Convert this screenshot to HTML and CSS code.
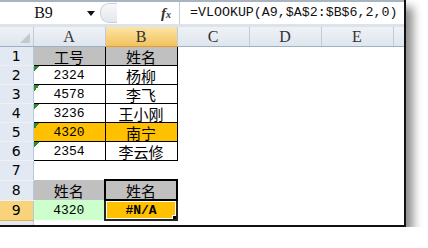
FILE: index.html
```html
<!doctype html>
<html lang="zh">
  <head>
    <meta charset="UTF-8" />
    <meta name="viewport" content="width=device-width, initial-scale=1.0" />
    <title>VLOOKUP</title>
    <link rel="stylesheet" href="styles.css">
  </head>
  <body>
    <div class="sheet">
      <div class="fbar">
        <div class="namebox">
          <span class="ref">B9</span>
          <span class="drop"></span>
        </div>
        <div class="grip"><span class="knob"></span></div>
        <div class="fx-area"><span class="fx">f<small>x</small></span></div>
        <div class="formula">=VLOOKUP(A9,$A$2:$B$6,2,0)</div>
      </div>

      <table class="grid">
        <colgroup>
          <col class="c-row" />
          <col class="c-col" />
          <col class="c-col" />
          <col class="c-col" />
          <col class="c-col" />
          <col class="c-col" />
          <col class="c-rest" />
        </colgroup>
        <tr class="colhead">
          <th class="corner"><span class="tri"></span></th>
          <th>A</th>
          <th class="sel">B</th>
          <th>C</th>
          <th>D</th>
          <th>E</th>
          <th></th>
        </tr>
        <tr>
          <th class="rowhead">1</th>
          <td class="box head">工号</td>
          <td class="box head">姓名</td>
          <td></td><td></td><td></td><td></td>
        </tr>
        <tr>
          <th class="rowhead">2</th>
          <td class="box num txt">2324</td>
          <td class="box">杨柳</td>
          <td></td><td></td><td></td><td></td>
        </tr>
        <tr>
          <th class="rowhead">3</th>
          <td class="box num txt">4578</td>
          <td class="box">李飞</td>
          <td></td><td></td><td></td><td></td>
        </tr>
        <tr>
          <th class="rowhead">4</th>
          <td class="box num txt">3236</td>
          <td class="box">王小刚</td>
          <td></td><td></td><td></td><td></td>
        </tr>
        <tr>
          <th class="rowhead">5</th>
          <td class="box num txt hit">4320</td>
          <td class="box hit">南宁</td>
          <td></td><td></td><td></td><td></td>
        </tr>
        <tr>
          <th class="rowhead">6</th>
          <td class="box num txt">2354</td>
          <td class="box">李云修</td>
          <td></td><td></td><td></td><td></td>
        </tr>
        <tr>
          <th class="rowhead">7</th>
          <td></td><td></td><td></td><td></td><td></td><td></td>
        </tr>
        <tr>
          <th class="rowhead">8</th>
          <td class="head">姓名</td>
          <td class="head strong">姓名</td>
          <td></td><td></td><td></td><td></td>
        </tr>
        <tr>
          <th class="rowhead sel">9</th>
          <td class="num lookup">4320</td>
          <td class="num hit active">#N/A</td>
          <td></td><td></td><td></td><td></td>
        </tr>
        <tr>
          <th class="rowhead"></th>
          <td></td><td></td><td></td><td></td><td></td><td></td>
        </tr>
      </table>
    </div>
  </body>
</html>
```

FILE: styles.css
```css
body {
  margin: 0;
  background: #fff;
  font-family: "Noto Sans CJK SC", sans-serif;
}
.sheet {
  width: 404px;
  height: 225px;
  overflow: hidden;
  background: #fff;
  border-right: 2px solid #111;
  border-bottom: 2px solid #111;
  box-shadow: 7px 7px 9px rgba(0, 0, 0, 0.45);
}

/* formula bar */
.fbar {
  display: flex;
  height: 22px;
  border-top: 2px solid #a9b4c2;
  border-bottom: 3px solid #dde3eb;
  background: #fff;
}
.namebox {
  width: 100px;
  display: flex;
  align-items: center;
}
.ref {
  flex: 1;
  text-align: center;
  font-family: "Liberation Serif", serif;
  font-size: 16px;
  color: #111;
}
.drop {
  width: 0;
  height: 0;
  margin-right: 5px;
  border-left: 4px solid transparent;
  border-right: 4px solid transparent;
  border-top: 5px solid #111;
}
.grip {
  width: 20px;
  display: flex;
  align-items: center;
}
.knob {
  width: 16px;
  height: 18px;
  border-radius: 9px 0 0 9px;
  border: 1px solid #c9ced6;
  border-right: none;
  background: linear-gradient(#f7f8fa, #e4e7ec);
}
.fx-area {
  width: 59px;
  display: flex;
  justify-content: flex-end;
  align-items: center;
  padding-right: 8px;
  box-sizing: border-box;
}
.fx {
  font-family: "Liberation Serif", serif;
  font-style: italic;
  font-weight: bold;
  font-size: 15px;
  color: #333;
}
.fx small {
  font-size: 10px;
}
.formula {
  flex: 1;
  border-left: 1px solid #c4ccd6;
  padding-left: 10px;
  font-family: "Liberation Mono", monospace;
  font-size: 13.3px;
  line-height: 22px;
  color: #111;
  white-space: nowrap;
}

/* grid */
.grid {
  border-collapse: collapse;
  table-layout: fixed;
  width: 404px;
}
.c-row {
  width: 33px;
}
.c-col {
  width: 72px;
}
.c-rest {
  width: 11px;
}
.grid th,
.grid td {
  padding: 0;
  height: 18px;
  text-align: center;
  font-weight: normal;
  font-size: 15px;
  line-height: 17px;
  color: #000;
  white-space: nowrap;
  overflow: hidden;
}
.colhead th {
  height: 19px;
  background: linear-gradient(#eef2f7, #dfe5ed);
  border-right: 1px solid #c2ccd8;
  border-bottom: 1px solid #9eb0c6;
  font-family: "Liberation Serif", serif;
  font-size: 16px;
  color: #333;
}
.colhead th.sel {
  background: linear-gradient(#fbe4a6, #f3c25c);
  border-bottom: 1px solid #e39b2e;
}
.corner {
  position: relative;
}
.tri {
  position: absolute;
  right: 3px;
  bottom: 3px;
  border-left: 10px solid transparent;
  border-bottom: 10px solid #c4c9d0;
}
.rowhead {
  background: #e2e9f2;
  border-right: 1px solid #b7c6d9;
  border-bottom: 1px solid #edf1f6;
  font-family: "DejaVu Sans", sans-serif;
  color: #333;
}
.grid .rowhead {
  font-size: 14px;
}
.rowhead.sel {
  background: #f8d37c;
  border-bottom: 1px solid #e5ae4c;
}

/* cells */
.num {
  font-family: "Liberation Mono", monospace;
}
.grid td.num {
  font-size: 13px;
}
.box {
  border: 1px solid #000;
}
.head {
  background-color: #c0c0c0;
}
.hit {
  background-color: #ffc000;
}
.lookup {
  background-color: #ccffcc;
}
.strong {
  border: 2px solid #000;
}
/* number stored as text marker */
.txt {
  background-image: linear-gradient(135deg, #2e8b2e 50%, transparent 50%);
  background-size: 6px 6px;
  background-repeat: no-repeat;
}
.active {
  position: relative;
  border: 2px solid #222;
  box-shadow: inset 0 0 0 1px #fff;
}
.grid td.active {
  font-weight: bold;
}
.active::after {
  content: "";
  position: absolute;
  right: -1px;
  bottom: -1px;
  width: 4px;
  height: 4px;
  background: #000;
  border-left: 1px solid #fff;
  border-top: 1px solid #fff;
}
```
